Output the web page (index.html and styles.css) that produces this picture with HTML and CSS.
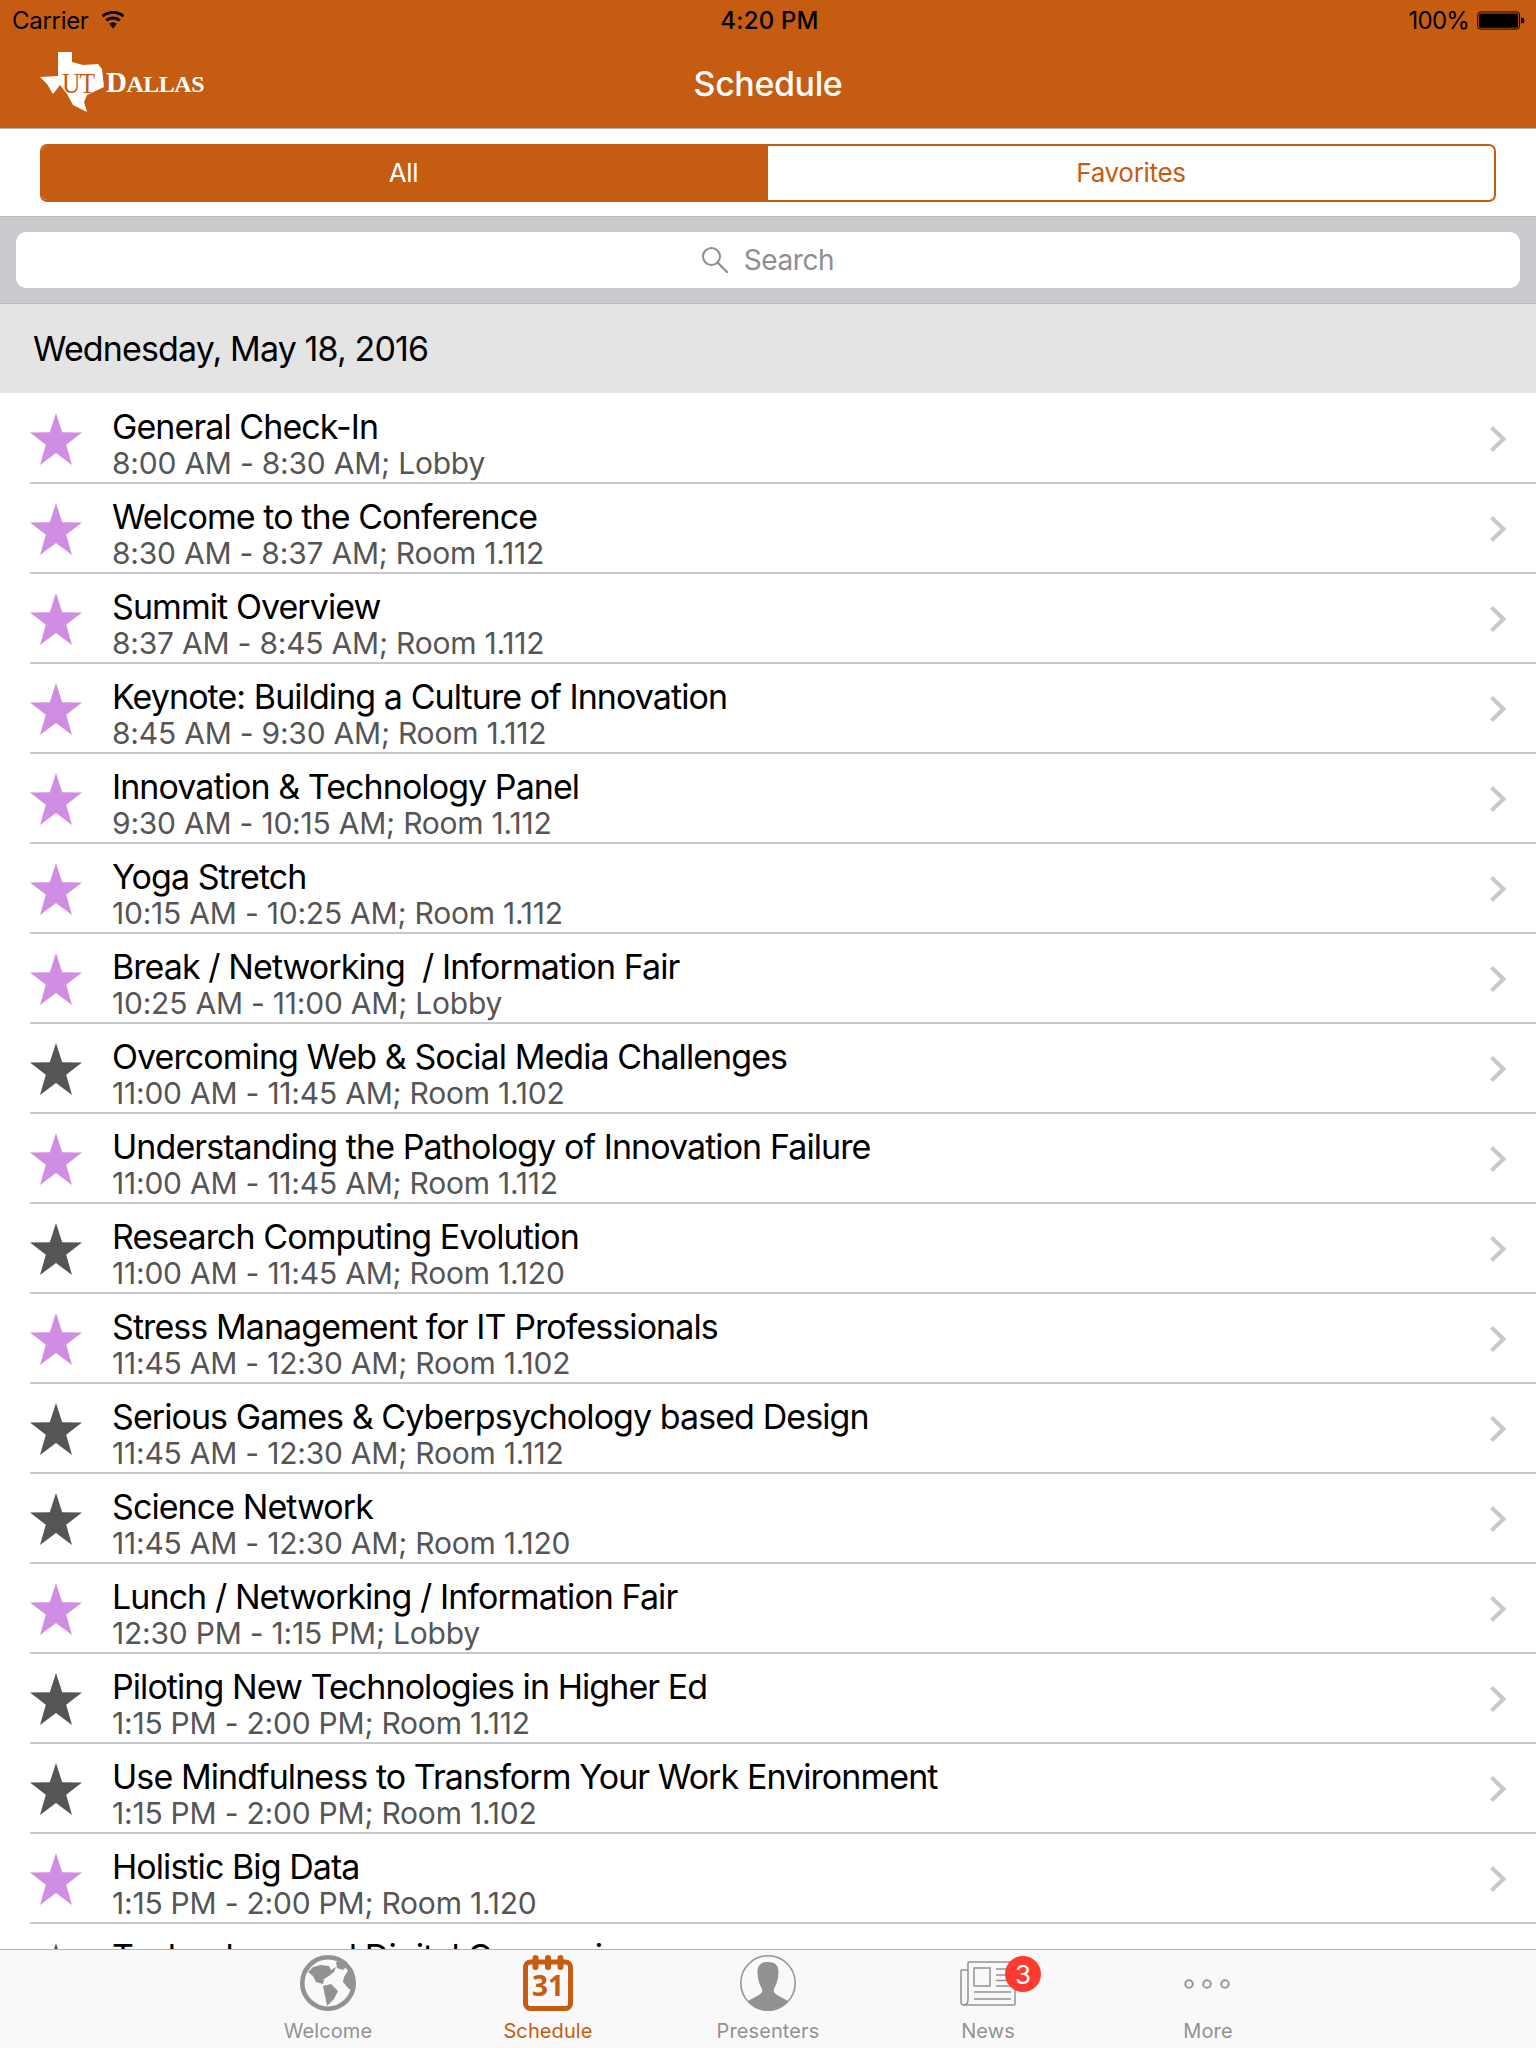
FILE: index.html
```html
<!DOCTYPE html>
<html lang="en">
<head>
<meta charset="utf-8">
<title>Schedule</title>
<link rel="stylesheet" href="styles.css">
</head>
<body>
<svg class="defs" width="0" height="0" aria-hidden="true">
  <symbol id="star" viewBox="0 0 52 52"><path d="M26 0 L32.200 19.300 L52 19.600 L36.200 31.800 L42 52 L26 40 L10 52 L15.800 31.800 L0 19.600 L19.800 19.300 Z"/></symbol>
  <symbol id="chev" viewBox="0 0 18 28"><path d="M2.500 2.500 L14.500 14 L2.500 25.500" fill="none" stroke="#c7c7cc" stroke-width="4"/></symbol>
</svg>
<div class="app">
  <header class="nav">
    <div class="status">
      <div class="status-left">
        <span>Carrier</span>
        <svg class="wifi" viewBox="0 0 26 20"><path d="M13 19.500 L8.800 14.200 A6.400 6.400 0 0 1 17.200 14.200 Z M6.600 11.800 L4.400 9.300 A13 13 0 0 1 21.600 9.300 L19.400 11.800 A9.800 9.800 0 0 0 6.600 11.800 Z M2.400 7 L0.400 4.700 A19 19 0 0 1 25.600 4.700 L23.600 7 A16 16 0 0 0 2.400 7 Z" fill="#000"/></svg>
      </div>
      <div class="status-time">4:20 PM</div>
      <div class="status-right">
        <span>100%</span>
        <svg class="battery" viewBox="0 0 50 20"><rect x="0.500" y="1" width="44" height="18" rx="3" fill="none" stroke="#000" stroke-width="1"/><rect x="2" y="2.500" width="41" height="15" rx="1.500" fill="#000"/><path d="M46 7 h1.500 a2 2 0 0 1 2 2 v2 a2 2 0 0 1 -2 2 h-1.500 Z" fill="#000"/></svg>
      </div>
    </div>
    <div class="navbar">
      <div class="logo">
        <svg class="texas" viewBox="0 0 64 60"><path d="M18 0 H32 V10 L43 13 L58 12 L62 17 L64 35 L47 43 L44 50 L47 60 L33 53 L27 42 L20 33 L13 42 L7 32 L0 25 L18 24 Z" fill="#fff"/></svg>
        <span class="logo-ut">UT</span>
        <span class="logo-dallas">D<small>ALLAS</small></span>
      </div>
      <h1 class="title">Schedule</h1>
    </div>
  </header>
  <div class="seg-wrap">
    <div class="seg">
      <div class="seg-item seg-on">All</div>
      <div class="seg-item">Favorites</div>
    </div>
  </div>
  <div class="search-wrap">
    <div class="search">
      <svg class="glass" viewBox="0 0 26 26"><circle cx="9.500" cy="9.500" r="8.500" fill="none" stroke="#8e8e93" stroke-width="2"/><path d="M15.500 15.500 L25 25" stroke="#8e8e93" stroke-width="2.400" stroke-linecap="round"/></svg>
      <span>Search</span>
    </div>
  </div>
  <div class="day">Wednesday, May 18, 2016</div>
  <main class="list">
    <div class="row"><svg class="star fav"><use href="#star"/></svg><div class="txt"><div class="t">General Check-In</div><div class="s">8:00 AM - 8:30 AM; Lobby</div></div><svg class="chev"><use href="#chev"/></svg></div>
    <div class="row"><svg class="star fav"><use href="#star"/></svg><div class="txt"><div class="t">Welcome to the Conference</div><div class="s">8:30 AM - 8:37 AM; Room 1.112</div></div><svg class="chev"><use href="#chev"/></svg></div>
    <div class="row"><svg class="star fav"><use href="#star"/></svg><div class="txt"><div class="t">Summit Overview</div><div class="s">8:37 AM - 8:45 AM; Room 1.112</div></div><svg class="chev"><use href="#chev"/></svg></div>
    <div class="row"><svg class="star fav"><use href="#star"/></svg><div class="txt"><div class="t">Keynote: Building a Culture of Innovation</div><div class="s">8:45 AM - 9:30 AM; Room 1.112</div></div><svg class="chev"><use href="#chev"/></svg></div>
    <div class="row"><svg class="star fav"><use href="#star"/></svg><div class="txt"><div class="t">Innovation &amp; Technology Panel</div><div class="s">9:30 AM - 10:15 AM; Room 1.112</div></div><svg class="chev"><use href="#chev"/></svg></div>
    <div class="row"><svg class="star fav"><use href="#star"/></svg><div class="txt"><div class="t">Yoga Stretch</div><div class="s">10:15 AM - 10:25 AM; Room 1.112</div></div><svg class="chev"><use href="#chev"/></svg></div>
    <div class="row"><svg class="star fav"><use href="#star"/></svg><div class="txt"><div class="t">Break / Networking&nbsp; / Information Fair</div><div class="s">10:25 AM - 11:00 AM; Lobby</div></div><svg class="chev"><use href="#chev"/></svg></div>
    <div class="row"><svg class="star"><use href="#star"/></svg><div class="txt"><div class="t">Overcoming Web &amp; Social Media Challenges</div><div class="s">11:00 AM - 11:45 AM; Room 1.102</div></div><svg class="chev"><use href="#chev"/></svg></div>
    <div class="row"><svg class="star fav"><use href="#star"/></svg><div class="txt"><div class="t">Understanding the Pathology of Innovation Failure</div><div class="s">11:00 AM - 11:45 AM; Room 1.112</div></div><svg class="chev"><use href="#chev"/></svg></div>
    <div class="row"><svg class="star"><use href="#star"/></svg><div class="txt"><div class="t">Research Computing Evolution</div><div class="s">11:00 AM - 11:45 AM; Room 1.120</div></div><svg class="chev"><use href="#chev"/></svg></div>
    <div class="row"><svg class="star fav"><use href="#star"/></svg><div class="txt"><div class="t">Stress Management for IT Professionals</div><div class="s">11:45 AM - 12:30 AM; Room 1.102</div></div><svg class="chev"><use href="#chev"/></svg></div>
    <div class="row"><svg class="star"><use href="#star"/></svg><div class="txt"><div class="t">Serious Games &amp; Cyberpsychology based Design</div><div class="s">11:45 AM - 12:30 AM; Room 1.112</div></div><svg class="chev"><use href="#chev"/></svg></div>
    <div class="row"><svg class="star"><use href="#star"/></svg><div class="txt"><div class="t">Science Network</div><div class="s">11:45 AM - 12:30 AM; Room 1.120</div></div><svg class="chev"><use href="#chev"/></svg></div>
    <div class="row"><svg class="star fav"><use href="#star"/></svg><div class="txt"><div class="t">Lunch / Networking / Information Fair</div><div class="s">12:30 PM - 1:15 PM; Lobby</div></div><svg class="chev"><use href="#chev"/></svg></div>
    <div class="row"><svg class="star"><use href="#star"/></svg><div class="txt"><div class="t">Piloting New Technologies in Higher Ed</div><div class="s">1:15 PM - 2:00 PM; Room 1.112</div></div><svg class="chev"><use href="#chev"/></svg></div>
    <div class="row"><svg class="star"><use href="#star"/></svg><div class="txt"><div class="t">Use Mindfulness to Transform Your Work Environment</div><div class="s">1:15 PM - 2:00 PM; Room 1.102</div></div><svg class="chev"><use href="#chev"/></svg></div>
    <div class="row"><svg class="star fav"><use href="#star"/></svg><div class="txt"><div class="t">Holistic Big Data</div><div class="s">1:15 PM - 2:00 PM; Room 1.120</div></div><svg class="chev"><use href="#chev"/></svg></div>
    <div class="row"><svg class="star"><use href="#star"/></svg><div class="txt"><div class="t">Technology and Digital Conversions</div><div class="s">&nbsp;</div></div><svg class="chev"><use href="#chev"/></svg></div>
  </main>
  <nav class="tabs">
    <div class="tab">
      <svg class="ico" viewBox="0 0 56 56"><circle cx="28" cy="28" r="25.700" fill="none" stroke="#929292" stroke-width="4.600"/><path d="M13 12 L21 10 L29 11 L31 15 L36 12 L34 17 L29 21 L24 24 L23 29 L16 27 L13 21 L8 17 Z M23 31 L31 29 L38 36 L34 44 L29 49 L27 51 L25 41 Z M36 7 L46 6 L48 10 L43 15 L37 13 Z M44 22 L49 14 L55 21 L55 34 L49 34 L43 27 Z" fill="#929292"/></svg>
      <span>Welcome</span>
    </div>
    <div class="tab tab-on">
      <svg class="ico" viewBox="0 0 50 56"><rect x="2.500" y="7" width="45" height="46.500" rx="5" fill="none" stroke="#c55c11" stroke-width="5"/><path d="M12.500 3 v9 M25 3 v9 M37.500 3 v9" stroke="#c55c11" stroke-width="6" stroke-linecap="round"/><text x="25" y="41" text-anchor="middle" class="cal">31</text></svg>
      <span>Schedule</span>
    </div>
    <div class="tab">
      <svg class="ico" viewBox="0 0 56 56"><circle cx="28" cy="28" r="27.200" fill="none" stroke="#929292" stroke-width="1.500"/><path d="M28 7 C35 7 38.500 10 38.500 17 C38.500 25 36 30 34 34 C33 37 35 39 39 41 L48 46 C42 53 35 56 28 56 C21 56 14 53 8 46 L17 41 C21 39 23 37 22 34 C20 30 17.500 25 17.500 17 C17.500 10 21 7 28 7 Z" fill="#929292"/></svg>
      <span>Presenters</span>
    </div>
    <div class="tab">
      <svg class="ico news" viewBox="0 0 56 46"><path d="M8 9 H2 a1 1 0 0 0 -1 1 V41 a3 3 0 0 0 3 3 H54 a1 1 0 0 0 1 -1 V2 a1 1 0 0 0 -1 -1 H9 a1 1 0 0 0 -1 1 V39 a5 5 0 0 1 -4 5" fill="none" stroke="#929292" stroke-width="1.500"/><rect x="14" y="7" width="16" height="18" fill="none" stroke="#929292" stroke-width="1.500"/><path d="M36 8 H51 M36 14 H51 M36 19.500 H51 M36 25 H51 M14 31 H51 M14 38 H51" stroke="#929292" stroke-width="1.500"/></svg>
      <div class="badge">3</div>
      <span>News</span>
    </div>
    <div class="tab">
      <svg class="ico dots" viewBox="0 0 46 10"><circle cx="5" cy="5" r="3.800" fill="none" stroke="#929292" stroke-width="1.800"/><circle cx="23" cy="5" r="3.800" fill="none" stroke="#929292" stroke-width="1.800"/><circle cx="41" cy="5" r="3.800" fill="none" stroke="#929292" stroke-width="1.800"/></svg>
      <span>More</span>
    </div>
  </nav>
</div>
</body>
</html>
```
FILE: styles.css
```css
* { box-sizing: border-box; }
html, body { margin: 0; padding: 0; }
body { font-family: Inter, "Liberation Sans", sans-serif; color: #000; background: #fff; }
.defs { position: absolute; }
.app { width: 1536px; height: 2048px; display: flex; flex-direction: column; overflow: hidden; position: relative; }

.nav { height: 129px; background: #c55c11; border-bottom: 1px solid #b2b2b2; flex: none; }
.status { height: 40px; display: grid; grid-template-columns: 1fr auto 1fr; align-items: center; padding: 0 11px 0 12px; font-size: 24px; letter-spacing: -0.3px; }
.status-left { display: flex; align-items: center; gap: 11px; }
.wifi { width: 26px; height: 18px; }
.status-time { font-weight: 500; letter-spacing: 0.2px; padding-left: 2px; }
.status-right { display: flex; align-items: center; justify-content: flex-end; gap: 8px; letter-spacing: -0.8px; }
.battery { width: 48px; height: 19px; }
.navbar { height: 88px; padding-bottom: 2px; display: flex; align-items: center; justify-content: center; position: relative; }
.title { margin: 0; color: #fff; font-size: 34px; font-weight: 500; letter-spacing: -0.4px; }
.logo { position: absolute; left: 40px; top: 12px; width: 165px; height: 60px; color: #fff; font-family: "Liberation Serif", serif; }
.texas { position: absolute; left: 0; top: 0; width: 64px; height: 60px; }
.logo-ut { position: absolute; left: 22px; top: 14px; font-size: 30px; line-height: 34px; color: #c55c11; letter-spacing: -1px; transform: scaleX(0.85); transform-origin: left center; }
.logo-dallas { position: absolute; left: 66px; top: 13px; font-size: 29px; line-height: 34px; font-weight: 700; letter-spacing: -0.5px; }
.logo-dallas small { font-size: 24px; }

.seg-wrap { height: 87px; padding: 15px 40px 14px; flex: none; }
.seg { height: 58px; display: grid; grid-template-columns: 1fr 1fr; border: 2px solid #c55c11; border-radius: 7px; overflow: hidden; }
.seg-item { display: flex; align-items: center; justify-content: center; font-size: 26px; color: #c55c11; letter-spacing: -0.3px; padding-bottom: 2px; }
.seg-on { background: #c55c11; color: #fff; padding-right: 3px; }

.search-wrap { height: 88px; background: #c9c9ce; padding: 15px 16px; border-top: 1px solid #b8b8bd; border-bottom: 1px solid #b8b8bd; flex: none; }
.search { height: 56px; background: #fff; border-radius: 10px; display: flex; align-items: center; justify-content: center; gap: 16px; font-size: 28px; color: #8e8e93; letter-spacing: -0.4px; }
.glass { width: 26px; height: 26px; }

.day { height: 89px; background: #e4e4e4; display: flex; align-items: center; padding-left: 33px; font-size: 34px; letter-spacing: -0.87px; flex: none; }

.list { flex: 1; overflow: hidden; }
.row { height: 90px; display: flex; align-items: center; position: relative; padding-left: 30px; }
.row::after { content: ""; position: absolute; left: 30px; right: 0; bottom: -1px; height: 2px; background: #c8c7cc; }
.star { width: 52px; height: 52px; flex: none; fill: #555; margin-top: 2px; }
.star.fav { fill: #cf8ee3; }
.txt { flex: 1; padding-left: 30px; padding-top: 13px; }
.t { font-size: 34px; line-height: 38px; letter-spacing: -0.93px; }
.s { font-size: 30px; line-height: 35px; color: #555; letter-spacing: -0.22px; }
.chev { width: 18px; height: 28px; flex: none; margin-right: 29px; margin-top: 2px; }

.tabs { height: 99px; flex: none; background: #f9f9f9; border-top: 1px solid #b2b2b2; display: grid; grid-template-columns: repeat(5, 220px); justify-content: center; position: relative; }
.tab { display: flex; flex-direction: column; align-items: center; position: relative; padding-top: 5px; color: #929292; font-size: 20px; letter-spacing: 0.1px; }
.tab span { position: absolute; top: 69px; }
.tab-on { color: #c55c11; }
.ico { height: 56px; width: 56px; }
.news { width: 56px; height: 46px; margin-top: 6px; }
.dots { width: 46px; height: 10px; margin-top: 24px; margin-right: 3px; }
.cal { font-family: "Open Sans", sans-serif; font-size: 28px; font-weight: 700; fill: #c55c11; }
.badge { position: absolute; top: 6px; left: 127px; width: 36px; height: 36px; border-radius: 50%; background: #ff3b30; color: #fff; font-size: 26px; display: flex; align-items: center; justify-content: center; }
```
